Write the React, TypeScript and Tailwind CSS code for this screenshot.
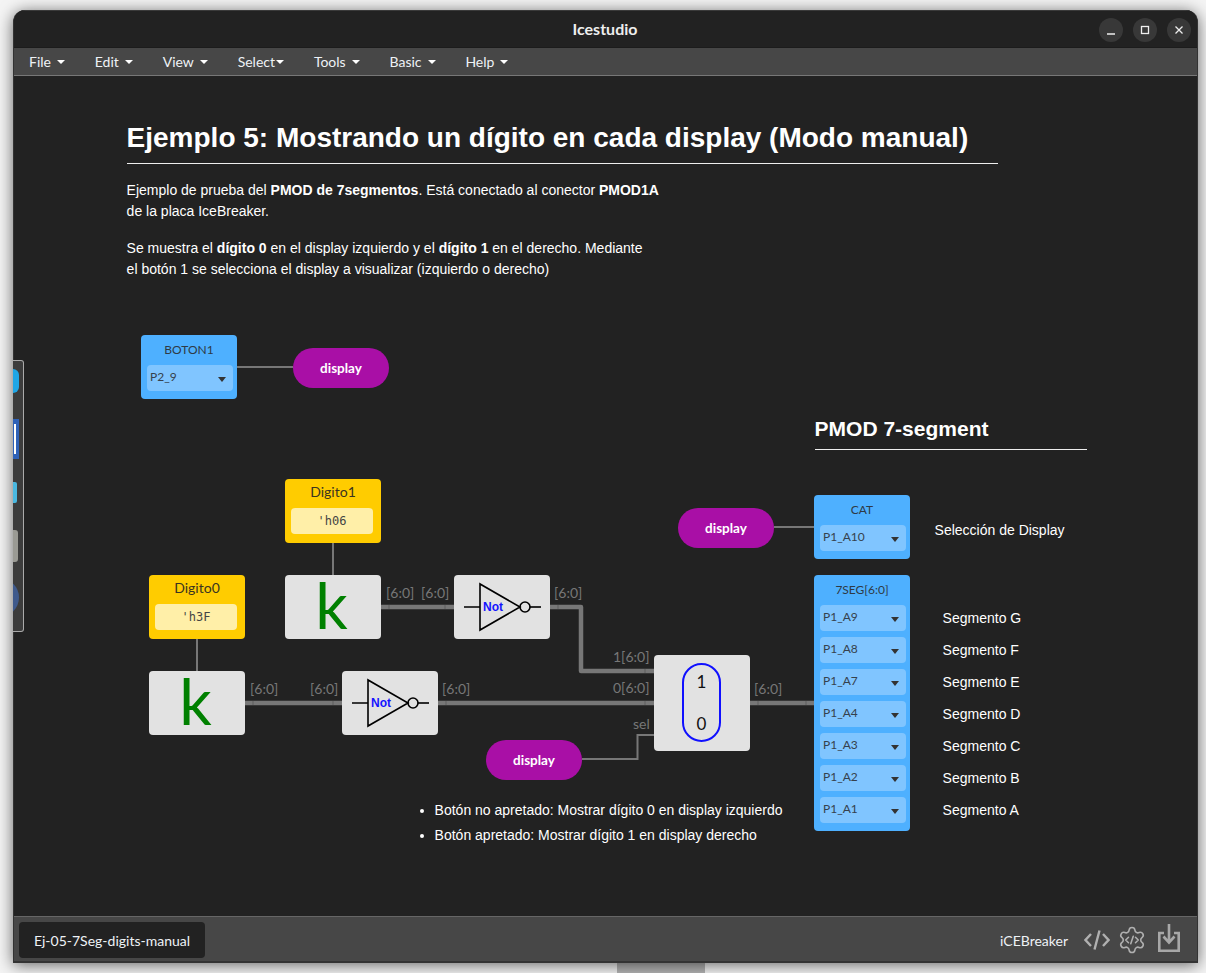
import React from 'react';

const MENU = ['File', 'Edit', 'View', 'Select', 'Tools', 'Basic', 'Help'];
const SEGMENTS = [
  { pin: 'P1_A9', label: 'Segmento G' },
  { pin: 'P1_A8', label: 'Segmento F' },
  { pin: 'P1_A7', label: 'Segmento E' },
  { pin: 'P1_A4', label: 'Segmento D' },
  { pin: 'P1_A3', label: 'Segmento C' },
  { pin: 'P1_A2', label: 'Segmento B' },
  { pin: 'P1_A1', label: 'Segmento A' },
];

const Caret: React.FC<{ className?: string }> = ({ className = '' }) => (
  <span className={`inline-block w-0 h-0 border-x-[4px] border-x-transparent border-t-[4px] ${className}`} />
);

const PinSelect: React.FC<{ pin: string }> = ({ pin }) => (
  <div className="h-[26px] rounded-[4px] bg-[#80c5ff] flex justify-between pl-[3px] pr-[7px] text-[12px] leading-[24px] text-[#36414c]">
    <span>{pin}</span>
    <Caret className="border-t-[#333] mt-[12px] border-t-[5px]" />
  </div>
);

const Pill: React.FC<{ className: string }> = ({ className }) => (
  <div className={`absolute w-24 h-10 rounded-[20px] bg-[#a90fa6] text-white font-bold text-[13.5px] flex items-center justify-center ${className}`}>
    display
  </div>
);

const Constant: React.FC<{ name: string; value: string; className: string }> = ({ name, value, className }) => (
  <div className={`absolute w-24 h-16 rounded-[4px] bg-[#ffcc00] pl-[6px] pr-[8px] pt-[3px] ${className}`}>
    <div className="text-center text-[14px] leading-[20px] text-[#3a3420] mb-[6px] pl-[2px]">{name}</div>
    <div className="h-[26px] rounded-[4px] bg-[#ffefa8] text-center text-[12px] leading-[26px] text-[#444] font-['DejaVu_Sans_Mono',monospace]">{value}</div>
  </div>
);

const KBlock: React.FC<{ className: string }> = ({ className }) => (
  <div className={`absolute w-24 h-16 rounded-[4px] bg-[#e2e2e2] flex justify-center pr-[3px] ${className}`}>
    <span className="text-[64px] leading-[64px] h-[64px] -mt-[2px] text-[#008000]">k</span>
  </div>
);

const NotBlock: React.FC<{ className: string }> = ({ className }) => (
  <div className={`absolute w-24 h-16 rounded-[4px] bg-[#e2e2e2] ${className}`}>
    <svg width="96" height="64" viewBox="0 0 96 64" fill="none" stroke="#000" strokeWidth="1.6">
      <path d="M10 32H26M26 9V55L66 32Z" />
      <circle cx="71" cy="32" r="5" />
      <path d="M76 32H87" />
      <text x="29" y="36" fill="#1414ff" stroke="none" fontSize="12" fontWeight="700" fontFamily="Liberation Sans, sans-serif">Not</text>
    </svg>
  </div>
);

const WireLabel: React.FC<{ text: string; className: string }> = ({ text, className }) => (
  <span className={`absolute text-[14px] leading-[16px] text-[#777] ${className}`}>{text}</span>
);

const Wires: React.FC = () => (
  <svg className="absolute left-0 top-0" width="1184" height="840" fill="none" stroke="#777">
    <g strokeWidth="2">
      <path d="M223 291H279" />
      <path d="M760 451H800" />
      <path d="M319 467V499" />
      <path d="M183 563V595" />
      <path d="M568 683H623.5V659H640" />
    </g>
    <g strokeWidth="4.5" strokeLinejoin="round">
      <path d="M367 531H440" />
      <path d="M231 627H328" />
      <path d="M536 531H567V595H640" />
      <path d="M424 627H640" />
      <path d="M736 627H800" />
    </g>
    <path
      d="M375 529V533M431 529V533M239 625V629M319 625V629M432 625V629M544 529V533M631 593V597M631 625V629M744 625V629M792 625V629"
      stroke="#5e5e5e"
      strokeWidth="1"
    />
  </svg>
);

const Canvas: React.FC = () => (
  <div className="relative flex-1 bg-[#222] font-['Lato',sans-serif]">
    {/* comentarios */}
    <div className="absolute left-[112.6px] top-[34px] w-[871.4px] font-['Liberation_Sans',sans-serif] text-white">
      <h1 className="text-[28px] leading-[56px] h-[54px] font-bold border-b border-[#eee]">
        Ejemplo 5: Mostrando un dígito en cada display (Modo manual)
      </h1>
      <p className="mt-[16px] text-[14px] leading-[21px]">
        Ejemplo de prueba del <b>PMOD de 7segmentos</b>. Está conectado al conector <b>PMOD1A</b>
        <br />
        de la placa IceBreaker.
      </p>
      <p className="mt-[16px] text-[14px] leading-[21px]">
        Se muestra el <b>dígito 0</b> en el display izquierdo y el <b>dígito 1</b> en el derecho. Mediante
        <br />
        el botón 1 se selecciona el display a visualizar (izquierdo o derecho)
      </p>
    </div>

    <div className="absolute left-[800.6px] top-[333px] w-[272.4px] h-[41px] border-b border-[#eee] font-['Liberation_Sans',sans-serif] text-white text-[21px] leading-[40px] font-bold">
      PMOD 7-segment
    </div>

    <Wires />

    <div className="absolute left-[127px] top-[259px] w-24 h-16 rounded-[4px] bg-[#4eb0ff] pl-[6px] pr-[4px] pt-[6px]">
      <div className="text-center text-[12px] leading-[18px] text-[#2f3a45] mb-[6px] pr-[2px]">BOTON1</div>
      <PinSelect pin="P2_9" />
    </div>
    <Pill className="left-[279px] top-[272px]" />

    <Constant name="Digito1" value="'h06" className="left-[271px] top-[403px]" />
    <Constant name="Digito0" value="'h3F" className="left-[135px] top-[499px]" />
    <KBlock className="left-[271px] top-[499px]" />
    <KBlock className="left-[135px] top-[595px]" />
    <NotBlock className="left-[440px] top-[499px]" />
    <NotBlock className="left-[328px] top-[595px]" />

    <WireLabel text="[6:0]" className="left-[372px] top-[509px]" />
    <WireLabel text="[6:0]" className="left-[407px] top-[509px]" />
    <WireLabel text="[6:0]" className="left-[540px] top-[509px]" />
    <WireLabel text="[6:0]" className="left-[236px] top-[605px]" />
    <WireLabel text="[6:0]" className="left-[296px] top-[605px]" />
    <WireLabel text="[6:0]" className="left-[428px] top-[605px]" />
    <WireLabel text="1[6:0]" className="left-[599px] top-[573px]" />
    <WireLabel text="0[6:0]" className="left-[599px] top-[604px]" />
    <WireLabel text="[6:0]" className="left-[740px] top-[605px]" />
    <WireLabel text="sel" className="left-[619px] top-[640px]" />

    <div className="absolute left-[640px] top-[579px] w-24 h-24 rounded-[4px] bg-[#e2e2e2] flex items-center justify-center pr-[1px] pb-[1px]">
      <div className="w-[39px] h-[79px] rounded-[20px] border-2 border-[#1010ff] flex flex-col items-center justify-between pt-[5px] pb-[4px] text-[17px] leading-[24px] text-[#111]">
        <span>1</span>
        <span>0</span>
      </div>
    </div>
    <Pill className="left-[472px] top-[664px]" />

    <Pill className="left-[664px] top-[432px]" />
    <div className="absolute left-[800px] top-[419px] w-24 h-16 rounded-[4px] bg-[#4eb0ff] pl-[6px] pr-[4px] pt-[6px]">
      <div className="text-center text-[12px] leading-[18px] text-[#2f3a45] mb-[6px] pr-[2px]">CAT</div>
      <PinSelect pin="P1_A10" />
    </div>
    <div className="absolute left-[920.6px] top-[444px] font-['Liberation_Sans',sans-serif] text-[14px] leading-[20px] text-white">
      Selección de Display
    </div>

    <div className="absolute left-[800px] top-[499px] w-24 h-64 rounded-[4px] bg-[#4eb0ff] pl-[6px] pr-[4px] pt-[6px]">
      <div className="text-center text-[12px] leading-[18px] text-[#2f3a45] mb-[6px] pr-[2px]">7SEG[6:0]</div>
      <div className="flex flex-col gap-[6px]">
        {SEGMENTS.map(s => <PinSelect key={s.pin} pin={s.pin} />)}
      </div>
    </div>
    <div className="absolute left-[928.6px] top-[526px] flex flex-col font-['Liberation_Sans',sans-serif] text-[14px] leading-[32px] text-white">
      {SEGMENTS.map(s => <span key={s.label}>{s.label}</span>)}
    </div>

    <ul className="absolute left-[420.6px] top-[722px] font-['Liberation_Sans',sans-serif] text-[14px] leading-[25px] text-white list-disc">
      <li>Botón no apretado: Mostrar dígito 0 en display izquierdo</li>
      <li>Botón apretado: Mostrar dígito 1 en display derecho</li>
    </ul>
  </div>
);

const App: React.FC = () => {
  return (
    <div className="relative w-[1206px] h-[973px] overflow-hidden bg-[#f4f4f4] font-['Lato',sans-serif]">
      <div className="absolute left-[617px] top-[960px] w-[88px] h-[13px] bg-[#b4b4b4]" />

      <div className="absolute left-[13px] top-[10px] w-[1185px] h-[953px] flex flex-col rounded-t-[12px] overflow-hidden border-x border-b border-[#333] bg-[#222] shadow-[0_2px_16px_rgba(0,0,0,0.6)]">
        <header className="relative h-[37px] shrink-0 flex items-center justify-center bg-[#222] border-t border-[#3a3a3a]">
          <span className="text-[16px] font-bold text-[#eee] -ml-[1px]">Icestudio</span>
          <div className="absolute right-[6px] top-[7px] flex gap-[10px]">
            <button className="w-6 h-6 rounded-full bg-[#383838] flex items-center justify-center">
              <svg width="10" height="10" viewBox="0 0 10 10" stroke="#eee" strokeWidth="1.3"><path d="M1 9H9" /></svg>
            </button>
            <button className="w-6 h-6 rounded-full bg-[#383838] flex items-center justify-center">
              <svg width="10" height="10" viewBox="0 0 10 10" fill="none" stroke="#eee" strokeWidth="1.3"><rect x="1.5" y="1.5" width="7" height="7" /></svg>
            </button>
            <button className="w-6 h-6 rounded-full bg-[#383838] flex items-center justify-center">
              <svg width="10" height="10" viewBox="0 0 10 10" stroke="#eee" strokeWidth="1.3"><path d="M1.5 1.5L8.5 8.5M8.5 1.5L1.5 8.5" /></svg>
            </button>
          </div>
        </header>

        <nav className="h-[29px] shrink-0 flex items-center pl-[15px] gap-[29.85px] bg-[#474747] border-t border-[#1c1c1c] border-b border-b-[#777] text-[14px] text-[#eef2f6]">
          {MENU.map(item => (
            <span key={item} className="flex items-center">
              {item}
              <Caret className={`border-t-white ${item === 'Select' ? 'ml-[1px]' : 'ml-[6px]'}`} />
            </span>
          ))}
        </nav>

        <Canvas />

        <footer className="h-[46px] shrink-0 flex items-center justify-between pt-[2px] pl-[5px] pr-[17px] bg-[#474747] border-t border-[#666] border-b border-b-[#333]">
          <div className="h-9 w-[186px] rounded-[4px] bg-[#222] flex items-center justify-center text-[14px] text-[#eef2f6]">
            Ej-05-7Seg-digits-manual
          </div>
          <div className="flex items-center">
            <span className="text-[14px] text-[#eef2f6] mr-[16px]">iCEBreaker</span>
            <svg width="26" height="22" viewBox="0 0 26 22" fill="none" stroke="#b0b0b0" strokeWidth="2.4" className="mr-[7px]">
              <path d="M7 5L1.5 11L7 17M19 5L24.5 11L19 17M15.5 1.5L10.5 20.5" />
            </svg>
            <svg width="30" height="30" viewBox="0 0 24 24" fill="none" stroke="#b0b0b0" strokeWidth="1.25" strokeLinecap="round" strokeLinejoin="round" className="mr-[11px] -my-[2px]">
              <path d="M9.671 4.136a2.34 2.34 0 0 1 4.659 0 2.34 2.34 0 0 0 3.319 1.915 2.34 2.34 0 0 1 2.33 4.033 2.34 2.34 0 0 0 0 3.831 2.34 2.34 0 0 1-2.33 4.033 2.34 2.34 0 0 0-3.319 1.915 2.34 2.34 0 0 1-4.659 0 2.34 2.34 0 0 0-3.32-1.915 2.34 2.34 0 0 1-2.33-4.033 2.34 2.34 0 0 0 0-3.831A2.34 2.34 0 0 1 6.35 6.051a2.34 2.34 0 0 0 3.32-1.915" />
              <path d="M9.2 9.8L7 12L9.2 14.2M14.8 9.8L17 12L14.8 14.2M13 9L11 15" />
            </svg>
            <svg width="22" height="28" viewBox="0 0 22 28" fill="none" stroke="#a8a8a8" strokeWidth="2.6" className="-mt-[4px]">
              <path d="M6 9H1.3V26.7H20.7V9H16" />
              <path d="M11 0V18M5.5 12.5L11 18.5L16.5 12.5" />
            </svg>
          </div>
        </footer>
      </div>

      {/* dock lateral recortado */}
      <div className="absolute left-[13px] top-[360px] w-[11px] h-[272px] rounded-r-[3px] bg-[#3c3c3c] border border-l-0 border-[#aaa] overflow-hidden">
        <div className="absolute left-0 top-[8px] w-[6px] h-[24px] rounded-r-[6px] bg-[#1fa6e6]" />
        <div className="absolute left-0 top-[58px] w-[6px] h-[40px] bg-[#2f62b8]">
          <div className="w-[2px] h-[30px] mt-[5px] ml-[1px] bg-white" />
        </div>
        <div className="absolute left-0 top-[121px] w-[4px] h-[21px] rounded-r-[2px] bg-[#4ab8e0]" />
        <div className="absolute left-0 top-[169px] w-[5px] h-[32px] rounded-r-[3px] bg-[#9a9a94]" />
        <div className="absolute left-[-34px] top-[217px] w-[40px] h-[39px] rounded-full bg-[#3f5a8c]" />
      </div>
    </div>
  );
};

export default App;
